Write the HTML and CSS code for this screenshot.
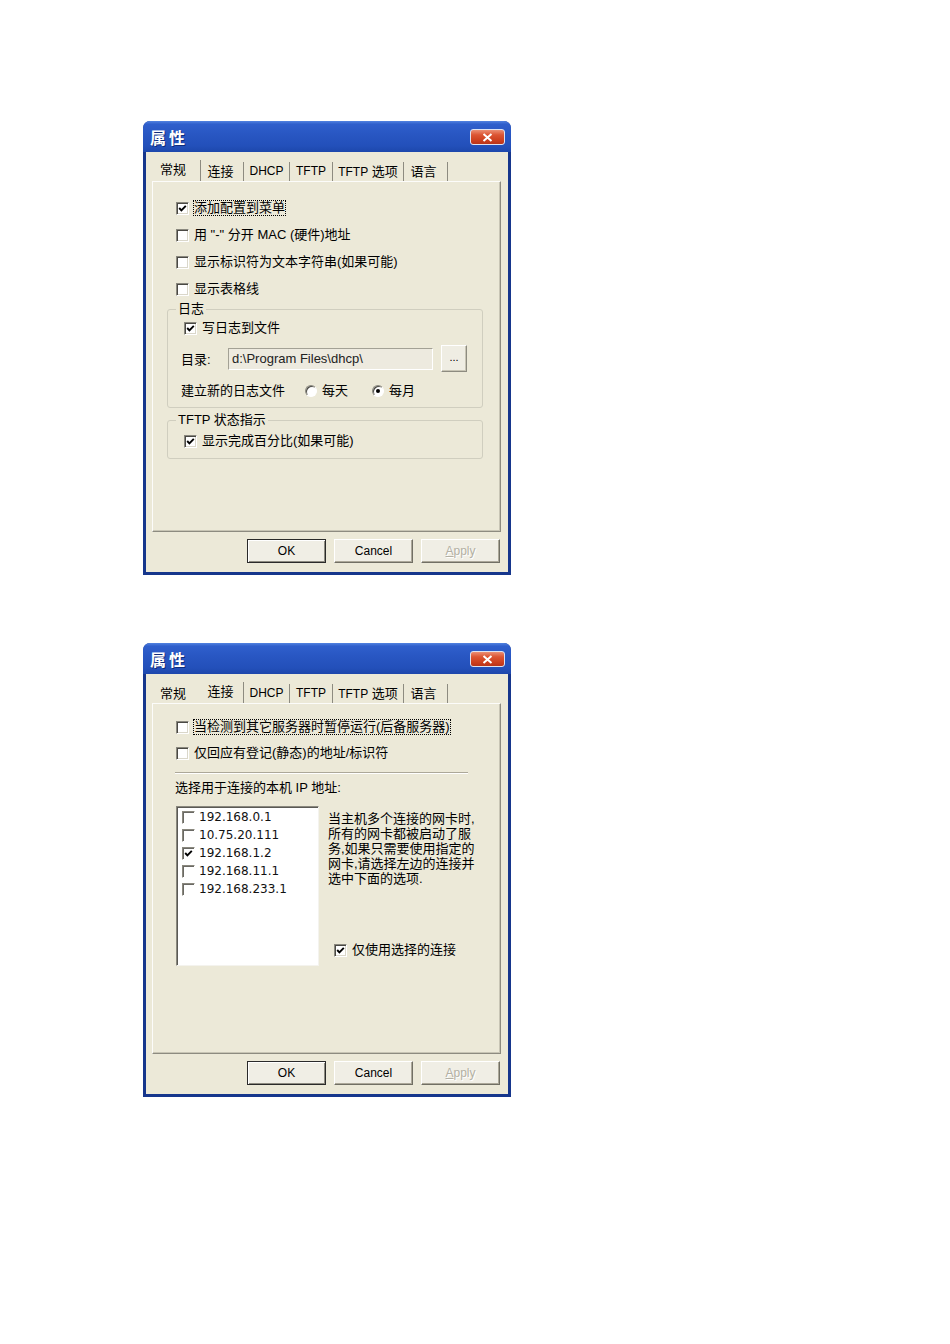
FILE: index.html
```html
<!DOCTYPE html>
<html>
<head>
<meta charset="utf-8">
<title>属性</title>
<link rel="stylesheet" href="styles.css">
</head>
<body>
<div class="page">

  <div class="window">
    <div class="titlebar">
      <span class="title">属性</span>
      <span class="close"><svg width="11" height="9" viewBox="0 0 11 9"><path d="M1.5 1 L9.5 8 M9.5 1 L1.5 8" stroke="#fff" stroke-width="2" fill="none"/></svg></span>
    </div>
    <div class="client">
      <div class="tabs">
        <div class="tab sel w1">常规</div>
        <div class="tab w2">连接</div>
        <div class="tab w3 lat">DHCP</div>
        <div class="tab w4 lat">TFTP</div>
        <div class="tab w5"><span class="lat">TFTP</span> 选项</div>
        <div class="tab w6">语言</div>
      </div>
      <div class="panel general">
        <div class="row ind"><span class="cb"><svg class="ck" viewBox="0 0 11 11"><path d="M2.2 5 L4.4 7.3 L8.8 2.8" stroke="#000" stroke-width="1.9" fill="none"/></svg></span><span class="focus">添加配置到菜单</span></div>
        <div class="row ind mt11"><span class="cb"></span>用 "-" 分开 MAC (硬件)地址</div>
        <div class="row ind mt11"><span class="cb"></span>显示标识符为文本字符串(如果可能)</div>
        <div class="row ind mt11"><span class="cb"></span>显示表格线</div>
        <div class="group g-log">
          <span class="glabel">日志</span>
          <div class="row ind3"><span class="cb"><svg class="ck" viewBox="0 0 11 11"><path d="M2.2 5 L4.4 7.3 L8.8 2.8" stroke="#000" stroke-width="1.9" fill="none"/></svg></span>写日志到文件</div>
          <div class="dirrow">
            <span class="dirlabel">目录:</span>
            <span class="input">d:\Program Files\dhcp\</span>
            <span class="smallbtn">...</span>
          </div>
          <div class="row radiorow">
            <span class="newlog">建立新的日志文件</span>
            <span class="rb"></span><span>每天</span>
            <span class="rb on second"></span><span>每月</span>
          </div>
        </div>
        <div class="group g-tftp">
          <span class="glabel">TFTP 状态指示</span>
          <div class="row ind3"><span class="cb"><svg class="ck" viewBox="0 0 11 11"><path d="M2.2 5 L4.4 7.3 L8.8 2.8" stroke="#000" stroke-width="1.9" fill="none"/></svg></span>显示完成百分比(如果可能)</div>
        </div>
      </div>
      <div class="buttons">
        <div class="btn default">OK</div>
        <div class="btn">Cancel</div>
        <div class="btn disabled"><u>A</u>pply</div>
      </div>
    </div>
  </div>

  <div class="window">
    <div class="titlebar">
      <span class="title">属性</span>
      <span class="close"><svg width="11" height="9" viewBox="0 0 11 9"><path d="M1.5 1 L9.5 8 M9.5 1 L1.5 8" stroke="#fff" stroke-width="2" fill="none"/></svg></span>
    </div>
    <div class="client">
      <div class="tabs">
        <div class="tab w1 nb">常规</div>
        <div class="tab sel w2">连接</div>
        <div class="tab w3 lat">DHCP</div>
        <div class="tab w4 lat">TFTP</div>
        <div class="tab w5"><span class="lat">TFTP</span> 选项</div>
        <div class="tab w6">语言</div>
      </div>
      <div class="panel connect">
        <div class="row ind"><span class="cb"></span><span class="focus">当检测到其它服务器时暂停运行(后备服务器)</span></div>
        <div class="row ind mt10"><span class="cb"></span>仅回应有登记(静态)的地址/标识符</div>
        <div class="sep"></div>
        <div class="iplabel">选择用于连接的本机 IP 地址:</div>
        <div class="listarea">
          <div class="listbox">
            <div class="item"><span class="cb"></span>192.168.0.1</div>
            <div class="item"><span class="cb"></span>10.75.20.111</div>
            <div class="item"><span class="cb"><svg class="ck" viewBox="0 0 11 11"><path d="M2.2 5 L4.4 7.3 L8.8 2.8" stroke="#000" stroke-width="1.9" fill="none"/></svg></span>192.168.1.2</div>
            <div class="item"><span class="cb"></span>192.168.11.1</div>
            <div class="item"><span class="cb"></span>192.168.233.1</div>
          </div>
          <div class="rightcol">
            <div class="note">当主机多个连接的网卡时,<br>所有的网卡都被启动了服<br>务,如果只需要使用指定的<br>网卡,请选择左边的连接并<br>选中下面的选项.</div>
            <div class="row onlysel"><span class="cb"><svg class="ck" viewBox="0 0 11 11"><path d="M2.2 5 L4.4 7.3 L8.8 2.8" stroke="#000" stroke-width="1.9" fill="none"/></svg></span>仅使用选择的连接</div>
          </div>
        </div>
      </div>
      <div class="buttons">
        <div class="btn default">OK</div>
        <div class="btn">Cancel</div>
        <div class="btn disabled"><u>A</u>pply</div>
      </div>
    </div>
  </div>

</div>
</body>
</html>
```

FILE: styles.css
```css
* { box-sizing: border-box; }
html, body { margin: 0; padding: 0; background: #fff; }
body {
  font-family: "Liberation Sans", "Noto Sans CJK SC", sans-serif;
  font-size: 13px;
  color: #000;
}
.page {
  display: flex;
  flex-direction: column;
  gap: 68px;
  padding: 121px 0 0 143px;
}

/* window frame */
.window {
  width: 368px;
  height: 454px;
  display: flex;
  flex-direction: column;
  border-radius: 7px 7px 0 0;
  overflow: hidden;
  background: #16368C;
}
.titlebar {
  height: 31px;
  flex: none;
  display: flex;
  align-items: center;
  justify-content: space-between;
  padding: 1px 6px 0 7px;
  background: linear-gradient(180deg, #5283E0 0%, #2F5FCC 10%, #2856C2 45%, #2350BA 80%, #1D47AC 100%);
}
.title {
  color: #fff;
  font-family: "Noto Sans CJK SC", sans-serif;
  font-weight: bold;
  font-size: 16px;
  letter-spacing: 3px;
  line-height: 18px;
  text-shadow: 1px 1px #0F2C7A;
}
.close {
  width: 35px;
  height: 16px;
  border-radius: 3px;
  border: 1px solid #DDE3F2;
  background: linear-gradient(180deg, #EB8F74 0%, #DC5533 35%, #CC3F1E 75%, #B9341A 100%);
  display: flex;
  align-items: center;
  justify-content: center;
}
.client {
  flex: 1;
  margin: 0 3px 3px 3px;
  background: #ECE9D8;
  padding: 8px 7px 9px 6px;
  display: flex;
  flex-direction: column;
}

/* tabs */
.tabs {
  height: 21px;
  display: flex;
  align-items: flex-end;
}
.tab {
  height: 19px;
  line-height: 19px;
  text-align: center;
  border-right: 1px solid #8D8B80;
  white-space: nowrap;
}
.tab.sel {
  height: 21px;
  padding-bottom: 2px;
}
.tab.nb { border-right-color: transparent; }
.lat { font-size: 12px; }
.w1 { width: 49px; padding-right: 6px; }
.w2 { width: 43px; padding-right: 3px; }
.w3 { width: 46px; }
.w4 { width: 43px; }
.w5 { width: 71px; }
.w6 { width: 44px; padding-right: 4px; }

/* panel */
.panel {
  height: 351px;
  border: 1px solid;
  border-color: #FCFCFA #8D8B80 #8D8B80 #FCFCFA;
  box-shadow: inset -1px -1px #C8C5B5;
  padding: 18px 17px 0 14px;
  display: flex;
  flex-direction: column;
}
.panel.connect { padding-top: 15px; }

.row {
  display: flex;
  align-items: center;
  height: 16px;
  line-height: 16px;
  white-space: nowrap;
}
.ind { padding-left: 9px; }
.ind3 { margin-left: 3px; }
.mt11 { margin-top: 11px; }
.mt10 { margin-top: 10px; }

.cb {
  width: 13px;
  height: 13px;
  flex: none;
  background: #fff;
  border: 1px solid;
  border-color: #8A887E #FFFFFF #FFFFFF #8A887E;
  box-shadow: inset 1px 1px #4A4944, inset -1px -1px #DAD7CA;
  margin-right: 5px;
  display: flex;
}
.ck { width: 11px; height: 11px; }

.focus {
  outline: 1px dotted #000;
  outline-offset: -1px;
  padding: 0 1px;
  margin-left: -1px;
}

/* group boxes */
.group {
  position: relative;
  border: 1px solid #D0CEBF;
  border-radius: 3px;
}
.glabel {
  position: absolute;
  top: -9px;
  left: 8px;
  padding: 0 2px;
  line-height: 16px;
  background: #ECE9D8;
  white-space: nowrap;
}
.g-log {
  margin-top: 12px;
  padding: 10px 0 8px 13px;
}
.g-tftp {
  margin-top: 12px;
  padding: 12px 0 9px 13px;
}
.dirrow {
  margin-top: 9px;
  height: 27px;
  display: flex;
  align-items: center;
}
.dirlabel { width: 47px; flex: none; }
.input {
  width: 205px;
  height: 22px;
  line-height: 20px;
  padding-left: 3px;
  border: 1px solid;
  border-color: #A3A195 #FFFFFF #FFFFFF #A3A195;
  background: #EDEADF;
  color: #222;
  white-space: nowrap;
  overflow: hidden;
}
.smallbtn {
  margin-left: 8px;
  width: 26px;
  height: 27px;
  border: 1px solid;
  border-color: #FFFFFF #8D8B80 #8D8B80 #FFFFFF;
  box-shadow: inset -1px -1px #C8C5B5;
  background: #EFEDE3;
  font-size: 11px;
  display: flex;
  align-items: center;
  justify-content: center;
  padding-bottom: 3px;
}
.radiorow { margin-top: 11px; }
.newlog { width: 124px; flex: none; }
.rb {
  width: 12px;
  height: 12px;
  flex: none;
  border-radius: 50%;
  background: #fff;
  border: 1px solid;
  border-color: #8A887E #FFFFFF #FFFFFF #8A887E;
  box-shadow: inset 1px 1px #4A4944;
  margin-right: 5px;
  position: relative;
}
.rb.on::after {
  content: "";
  position: absolute;
  left: 3px;
  top: 3px;
  width: 4px;
  height: 4px;
  border-radius: 50%;
  background: #000;
}
.rb.second { margin-left: 24px; }

/* connection panel */
.sep {
  margin: 11px 0 0 8px;
  width: 293px;
  height: 2px;
  border-top: 1px solid #ACA899;
  border-bottom: 1px solid #FFFFFF;
}
.iplabel {
  margin-top: 6px;
  padding-left: 8px;
  line-height: 16px;
  white-space: nowrap;
}
.listarea {
  margin-top: 10px;
  display: flex;
}
.listbox {
  margin-left: 9px;
  width: 143px;
  height: 160px;
  flex: none;
  background: #fff;
  border: 1px solid;
  border-color: #8A887E #F4F3EE #F4F3EE #8A887E;
  box-shadow: inset 1px 1px #5A5954;
  padding: 1px 0 0 5px;
}
.item {
  height: 18px;
  display: flex;
  align-items: center;
  font-family: "DejaVu Sans", sans-serif;
  font-size: 12px;
  color: #111;
  white-space: nowrap;
}
.item .cb {
  margin-right: 4px;
  box-shadow: inset 1px 1px #6A6964;
}
.rightcol {
  margin-left: 9px;
  height: 160px;
  display: flex;
  flex-direction: column;
}
.note {
  margin-top: 5px;
  line-height: 15px;
  white-space: nowrap;
}
.onlysel {
  margin-top: auto;
  margin-bottom: 8px;
  margin-left: 6px;
}

/* buttons */
.buttons {
  margin-top: 7px;
  height: 24px;
  display: flex;
  justify-content: flex-end;
  gap: 8px;
  padding-right: 1px;
}
.btn {
  width: 79px;
  height: 24px;
  display: flex;
  align-items: center;
  justify-content: center;
  font-size: 12px;
  background: #F0EEE5;
  border: 1px solid;
  border-color: #FFFFFF #716F64 #716F64 #FFFFFF;
  box-shadow: inset -1px -1px #ACA899;
}
.btn.default {
  border-color: #2A2A2A;
  box-shadow: inset 1px 1px #FFFFFF, inset -1px -1px #8D8B80;
}
.btn.disabled {
  color: #B3B0A3;
  text-shadow: 1px 1px #FFFFFF;
}
```
